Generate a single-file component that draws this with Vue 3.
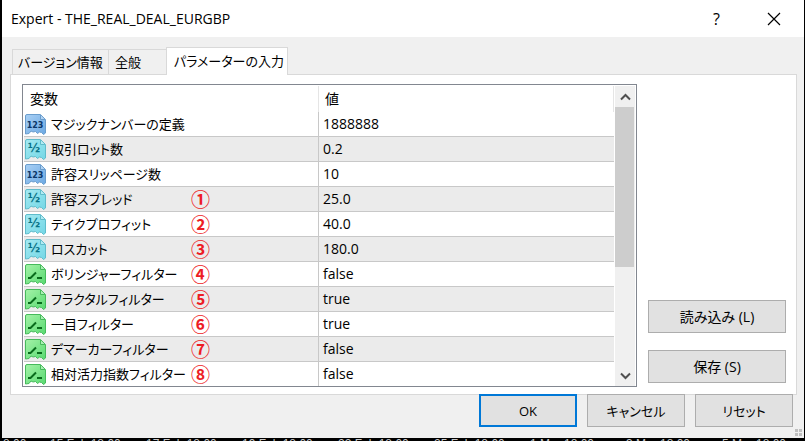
<script setup>
    import { ref } from 'vue';

    const tabs = [
        { id: 'version', label: 'バージョン情報' },
        { id: 'general', label: '全般' },
        { id: 'inputs', label: 'パラメーターの入力' }
    ];
    const activeTab = ref('inputs');

    const params = ref([
        { type: 'int', name: 'マジックナンバーの定義', value: '1888888' },
        { type: 'double', name: '取引ロット数', value: '0.2' },
        { type: 'int', name: '許容スリッページ数', value: '10' },
        { type: 'double', name: '許容スプレッド', value: '25.0', mark: '①' },
        { type: 'double', name: 'テイクプロフィット', value: '40.0', mark: '②' },
        { type: 'double', name: 'ロスカット', value: '180.0', mark: '③' },
        { type: 'bool', name: 'ボリンジャーフィルター', value: 'false', mark: '④' },
        { type: 'bool', name: 'フラクタルフィルター', value: 'true', mark: '⑤' },
        { type: 'bool', name: '一目フィルター', value: 'true', mark: '⑥' },
        { type: 'bool', name: 'デマーカーフィルター', value: 'false', mark: '⑦' },
        { type: 'bool', name: '相対活力指数フィルター', value: 'false', mark: '⑧' }
    ]);

    const dates = ['15 Feb 18:00', '17 Feb 18:00', '19 Feb 18:00', '22 Feb 18:00', '25 Feb 18:00', '1 Mar 18:00', '3 Mar 18:00', '5 Mar 18:00'];
</script>

<template>
    <div class="desktop">
        <div class="dialog" role="dialog" aria-labelledby="dialog-title">
            <header class="titlebar">
                <h1 id="dialog-title" class="titlebar__title">Expert - THE_REAL_DEAL_EURGBP</h1>
                <button class="titlebar__button" type="button">?</button>
                <button class="titlebar__button" type="button" aria-label="閉じる">
                    <svg width="14" height="14" viewBox="0 0 14 14"><path d="M1 1L13 13M13 1L1 13" stroke="#000" stroke-width="1.2" fill="none" /></svg>
                </button>
            </header>

            <div class="dialog__body">
                <div class="tabs" role="tablist">
                    <button
                        v-for="tab in tabs"
                        :key="tab.id"
                        class="tab"
                        :class="[`tab--${tab.id}`, { 'tab--active': activeTab === tab.id }]"
                        type="button"
                        role="tab"
                        :aria-selected="activeTab === tab.id"
                        @click="activeTab = tab.id"
                    >{{ tab.label }}</button>
                </div>

                <div class="panel">
                    <div class="list">
                        <table class="params">
                            <thead>
                                <tr>
                                    <th class="params__name">変数</th>
                                    <th>値</th>
                                </tr>
                            </thead>
                            <tbody>
                                <tr v-for="param in params" :key="param.name">
                                    <td class="params__name">
                                        <div class="param">
                                            <svg class="param__icon" :class="`param__icon--${param.type}`" width="21" height="21" viewBox="0 0 21 21">
                                                <defs>
                                                    <linearGradient :id="`fill-${param.type}`" x1="0" y1="0" x2="1" y2="1">
                                                        <stop offset="0" class="stop-light" />
                                                        <stop offset="1" class="stop-dark" />
                                                    </linearGradient>
                                                </defs>
                                                <path class="sheet" :fill="`url(#fill-${param.type})`" d="M2 .5H15.5L20.500 5.500V19L18.500 20.500L16.500 18.500L14.500 18L12.500 19.500L10.500 17.500L8 18L6 17L4 19.500L.5 20V2Q.5 .5 2 .5Z" />
                                                <path class="fold" d="M15.500 1V5.500H20" />
                                                <text v-if="param.type === 'int'" class="glyph" x="10" y="14" font-size="8">123</text>
                                                <text v-else-if="param.type === 'double'" class="glyph" x="9" y="13" font-size="12">½</text>
                                                <path v-else class="switch" d="M3 14H5.500L11 8.500M12 14H17" />
                                            </svg>
                                            <span>{{ param.name }}</span>
                                            <span v-if="param.mark" class="param__mark">{{ param.mark }}</span>
                                        </div>
                                    </td>
                                    <td>{{ param.value }}</td>
                                </tr>
                            </tbody>
                        </table>
                        <div class="scroll">
                            <button class="scroll__arrow" type="button" aria-label="上へ">
                                <svg width="11" height="8" viewBox="0 0 11 8"><path d="M1 6.500L5.500 2L10 6.500" /></svg>
                            </button>
                            <div class="scroll__track"><div class="scroll__thumb"></div></div>
                            <button class="scroll__arrow" type="button" aria-label="下へ">
                                <svg width="11" height="8" viewBox="0 0 11 8"><path d="M1 1.500L5.500 6L10 1.500" /></svg>
                            </button>
                        </div>
                    </div>

                    <div class="side">
                        <button class="button" type="button">読み込み (L)</button>
                        <button class="button" type="button">保存 (S)</button>
                    </div>
                </div>

                <footer class="actions">
                    <button class="button button--default" type="button">OK</button>
                    <button class="button" type="button">キャンセル</button>
                    <button class="button" type="button">リセット</button>
                </footer>
            </div>
            <svg class="grip" width="7" height="7" viewBox="0 0 7 7"><path d="M0 0h3v3H0zM4 0h3v3H4zM0 4h3v3H0zM4 4h3v3H4z" fill="#bfbfbf" /></svg>
        </div>

        <div class="axis">
            <span class="axis__first">8:00</span>
            <span v-for="date in dates" :key="date" class="axis__date">{{ date }}</span>
        </div>
    </div>
</template>

<style>
    body {
        margin: 0;
        background: #000;
    }
</style>

<style scoped>
    .desktop {
        overflow: hidden;
        background: #000;
        font-family: "Open Sans", "Noto Sans CJK JP", sans-serif;
        font-size: 14px;
        line-height: 20px;
        font-feature-settings: "palt";
        color: #000;
    }

    button {
        box-sizing: border-box;
        margin: 0;
        padding: 0;
        border: none;
        background: none;
        font: inherit;
        font-feature-settings: inherit;
        color: inherit;
    }

    .dialog {
        position: relative;
        margin: 0 1px 0 2px;
        background: #f0f0f0;
    }

    .titlebar {
        display: flex;
        align-items: center;
        height: 37px;
        padding: 0 2px 0 9px;
        background: #fff;
    }

    .titlebar__title {
        flex: 1;
        margin: 0;
        font-size: 14px;
        font-weight: 400;
    }

    .titlebar__button {
        display: flex;
        align-items: center;
        justify-content: center;
        width: 57px;
        height: 37px;
        font-size: 16px;
    }

    .dialog__body {
        padding: 10px 7px 11px 8px;
    }

    .tabs {
        display: flex;
        align-items: flex-end;
        padding-left: 2px;
        font-size: 13px;
    }

    .tab {
        height: 25px;
        border: 1px solid #d9d9d9;
        border-bottom: none;
        background: #f0f0f0;
        text-align: left;
        white-space: nowrap;
    }

    .tab--version {
        width: 96px;
        padding-left: 5px;
        border-right: none;
    }

    .tab--general {
        width: 58px;
        padding-left: 6px;
        border-right: none;
    }

    .tab--inputs {
        width: 122px;
        padding-left: 7px;
    }

    .tab--active {
        position: relative;
        height: 28px;
        margin-bottom: -1px;
        padding-bottom: 2px;
        background: #fff;
    }

    .panel {
        display: flex;
        gap: 11px;
        padding: 9px 10px 7px 11px;
        border: 1px solid #d9d9d9;
        background: #fff;
    }

    .list {
        display: flex;
        flex: 1;
        padding: 1px 1px 0;
        border: 1px solid #828790;
    }

    .params {
        flex: 1;
        border-collapse: separate;
        border-spacing: 0;
        table-layout: fixed;
    }

    .params th {
        height: 26px;
        padding: 0 0 0 6px;
        border-right: 1px solid #e5e5e5;
        box-sizing: border-box;
        font-weight: 400;
        text-align: left;
    }

    .params td {
        box-sizing: border-box;
        height: 25px;
        padding: 0 0 0 4px;
        border-bottom: 1px solid #c8c8c8;
    }

    .params tr:last-child td {
        height: 24px;
        border-bottom: none;
    }

    .params tbody tr:nth-child(even) {
        background: #ebebeb;
    }

    .params .params__name {
        width: 295px;
    }

    .params td.params__name {
        padding-left: 1px;
        border-right: 1px solid #c8c8c8;
    }

    .param {
        position: relative;
        display: flex;
        align-items: center;
        gap: 5px;
        height: 24px;
        font-size: 13px;
        white-space: nowrap;
    }

    .param__mark {
        position: absolute;
        left: 166px;
        color: #ed1c24;
        font-family: "Noto Sans CJK JP", sans-serif;
        font-size: 19px;
        font-weight: 700;
    }

    .sheet {
        stroke-width: 1;
    }

    .fold {
        fill: #fff;
        fill-opacity: 0.35;
    }

    .glyph {
        font-family: "DejaVu Sans", sans-serif;
        font-weight: 700;
        text-anchor: middle;
    }

    .switch {
        fill: none;
        stroke: #086b1c;
        stroke-width: 2;
    }

    .param__icon--int .stop-light { stop-color: #a9d0f5; }
    .param__icon--int .stop-dark { stop-color: #6ba8e2; }
    .param__icon--int .sheet,
    .param__icon--int .fold { stroke: #6a9dcd; }
    .param__icon--int .glyph { fill: #0b3768; }

    .param__icon--double .stop-light { stop-color: #a5eaf2; }
    .param__icon--double .stop-dark { stop-color: #72d6e5; }
    .param__icon--double .sheet,
    .param__icon--double .fold { stroke: #5fbccb; }
    .param__icon--double .glyph { fill: #087387; }

    .param__icon--bool .stop-light { stop-color: #a5f3a9; }
    .param__icon--bool .stop-dark { stop-color: #58d970; }
    .param__icon--bool .sheet,
    .param__icon--bool .fold { stroke: #46ba5c; }

    .scroll {
        display: flex;
        flex-direction: column;
        width: 20px;
        margin-left: 1px;
        background: #f0f0f0;
    }

    .scroll__arrow {
        display: flex;
        align-items: center;
        justify-content: center;
        height: 21px;
    }

    .scroll__arrow path {
        fill: none;
        stroke: #505050;
        stroke-width: 2;
    }

    .scroll__track {
        flex: 1;
    }

    .scroll__thumb {
        width: 19px;
        height: 62%;
        background: #cdcdcd;
    }

    .side {
        display: flex;
        flex-direction: column;
        justify-content: flex-end;
        gap: 17px;
        width: 138px;
        padding-bottom: 4px;
    }

    .button {
        height: 33px;
        border: 1px solid #adadad;
        background: #e1e1e1;
    }

    .button--default {
        border: 2px solid #0078d7;
    }

    .actions {
        position: relative;
        display: flex;
        justify-content: flex-end;
        gap: 10px;
        margin-top: -1px;
        padding-right: 4px;
        font-size: 13px;
    }

    .actions .button {
        width: 98px;
    }

    .grip {
        position: absolute;
        right: 2px;
        bottom: 2px;
    }

    .axis {
        display: flex;
        padding-left: 3px;
        height: 3px;
        overflow: hidden;
        color: #c8c8c8;
        font-family: "Liberation Sans", sans-serif;
        font-size: 12px;
        line-height: 12px;
        white-space: nowrap;
    }

    .axis__first {
        flex: none;
        width: 47px;
    }

    .axis__date {
        flex: none;
        width: 96px;
    }
</style>
